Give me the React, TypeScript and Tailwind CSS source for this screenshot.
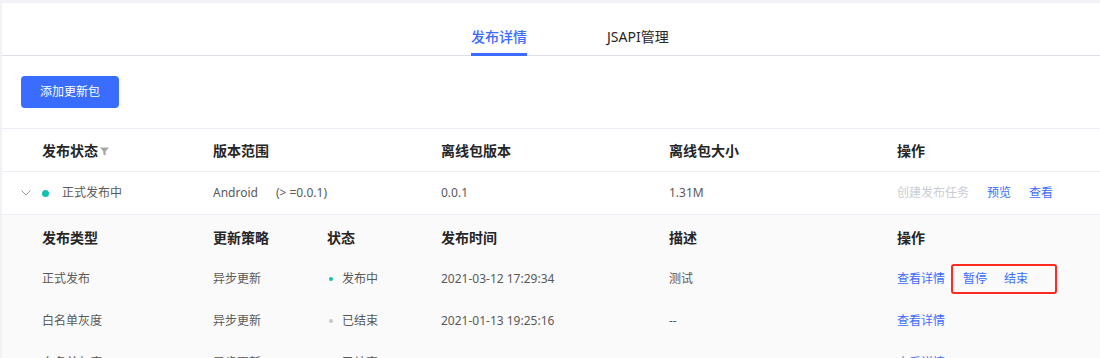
import React from "react";

const blue = "text-[#3d6bff]";

function Funnel() {
  return (
    <svg width="9" height="9" viewBox="0 0 9 9" className="ml-[2px] mt-[2px]">
      <path d="M0 0.5 H9 L5.6 4.5 V8.5 L3.4 7.6 V4.5 Z" fill="#a6a6a6" />
    </svg>
  );
}

function Chevron() {
  return (
    <svg width="10" height="6" viewBox="0 0 10 6">
      <path d="M0.5 0.5 L5 5 L9.5 0.5" fill="none" stroke="#9a9a9a" strokeWidth="1" />
    </svg>
  );
}

export default function App() {
  return (
    <div className="h-[358px] w-[1100px] overflow-hidden bg-[#f0f2f5] pl-[2px] pt-[3px] font-['Noto_Sans','Noto_Sans_CJK_SC',sans-serif]">
      <div className="h-full bg-white">
        {/* Tabs */}
        <div className="flex h-[53px] border-b border-[#dcdfe6] pl-[469px]">
          <div className="relative flex h-full items-center pt-[14px] text-[14px] font-medium text-[#3d6bff]">
            发布详情
            <span className="absolute bottom-[-1px] left-0 right-0 h-[3px] bg-[#3d6bff]" />
          </div>
          <div className="ml-[80px] flex h-full items-center pt-[14px] text-[14px] text-[#262626]">
            JSAPI管理
          </div>
        </div>

        {/* Button */}
        <div className="pl-[19px] pt-[20px]">
          <button className="h-[32px] w-[98px] rounded-[4px] bg-[#3a6cff] text-[12px] text-white">
            添加更新包
          </button>
        </div>

        {/* Table */}
        <div className="mt-[20px] border-t border-[#ebeef5] text-[12px] text-[#595959]">
          <div className="flex h-[43px] items-center border-b border-[#ebeef5] pl-[40px] text-[14px] font-bold text-[#262626]">
            <div className="flex w-[171px] items-center">
              发布状态
              <Funnel />
            </div>
            <div className="w-[228px]">版本范围</div>
            <div className="w-[228px]">离线包版本</div>
            <div className="w-[228px]">离线包大小</div>
            <div>操作</div>
          </div>
          <div className="flex h-[43px] items-center border-b border-[#ebeef5]">
            <div className="flex w-[40px] items-center pl-[19px]">
              <Chevron />
            </div>
            <div className="flex w-[171px] items-center">
              <span className="h-[7px] w-[7px] rounded-full bg-[#13bfae]" />
              <span className="ml-[13px]">正式发布中</span>
            </div>
            <div className="flex w-[228px] items-center">
              <span>Android</span>
              <span className="ml-[18px]">(&gt; =0.0.1)</span>
            </div>
            <div className="w-[228px]">0.0.1</div>
            <div className="w-[228px]">1.31M</div>
            <div className="flex items-center gap-[18px]">
              <span className="text-[#c9cdd4]">创建发布任务</span>
              <span className={blue}>预览</span>
              <span className={blue}>查看</span>
            </div>
          </div>

          {/* Expanded */}
          <div className="bg-[#fafafa] pt-[1px]">
            <div className="flex h-[42px] items-center pl-[40px] text-[14px] font-bold text-[#262626]">
              <div className="w-[171px]">发布类型</div>
              <div className="w-[114px]">更新策略</div>
              <div className="w-[114px]">状态</div>
              <div className="w-[228px]">发布时间</div>
              <div className="w-[228px]">描述</div>
              <div>操作</div>
            </div>
            <div className="flex h-[42px] items-center pl-[40px]">
              <div className="w-[171px]">正式发布</div>
              <div className="w-[114px]">异步更新</div>
              <div className="flex w-[114px] items-center">
                <span className="ml-[2px] h-[4px] w-[4px] rounded-full bg-[#13bfae]" />
                <span className="ml-[9px]">发布中</span>
              </div>
              <div className="w-[228px]">2021-03-12 17:29:34</div>
              <div className="w-[228px]">测试</div>
              <div className="flex items-center">
                <span className={blue}>查看详情</span>
                <div className="ml-[6px] flex h-[30px] items-center gap-[17px] rounded-[3px] border-2 border-[#ff2a1f] pl-[10px] pr-[27px]">
                  <span className={blue}>暂停</span>
                  <span className={blue}>结束</span>
                </div>
              </div>
            </div>
            <div className="flex h-[42px] items-center pl-[40px]">
              <div className="w-[171px]">白名单灰度</div>
              <div className="w-[114px]">异步更新</div>
              <div className="flex w-[114px] items-center">
                <span className="ml-[2px] h-[4px] w-[4px] rounded-full bg-[#c8c8c8]" />
                <span className="ml-[9px]">已结束</span>
              </div>
              <div className="w-[228px]">2021-01-13 19:25:16</div>
              <div className="w-[228px]">--</div>
              <div className="flex items-center">
                <span className={blue}>查看详情</span>
              </div>
            </div>
            <div className="flex h-[42px] items-center pl-[40px]">
              <div className="w-[171px]">白名单灰度</div>
              <div className="w-[114px]">异步更新</div>
              <div className="flex w-[114px] items-center">
                <span className="ml-[2px] h-[4px] w-[4px] rounded-full bg-[#c8c8c8]" />
                <span className="ml-[9px]">已结束</span>
              </div>
              <div className="w-[228px]">2021-01-10 10:12:30</div>
              <div className="w-[228px]">--</div>
              <div className="flex items-center">
                <span className={blue}>查看详情</span>
              </div>
            </div>
          </div>
        </div>
      </div>
    </div>
  );
}
